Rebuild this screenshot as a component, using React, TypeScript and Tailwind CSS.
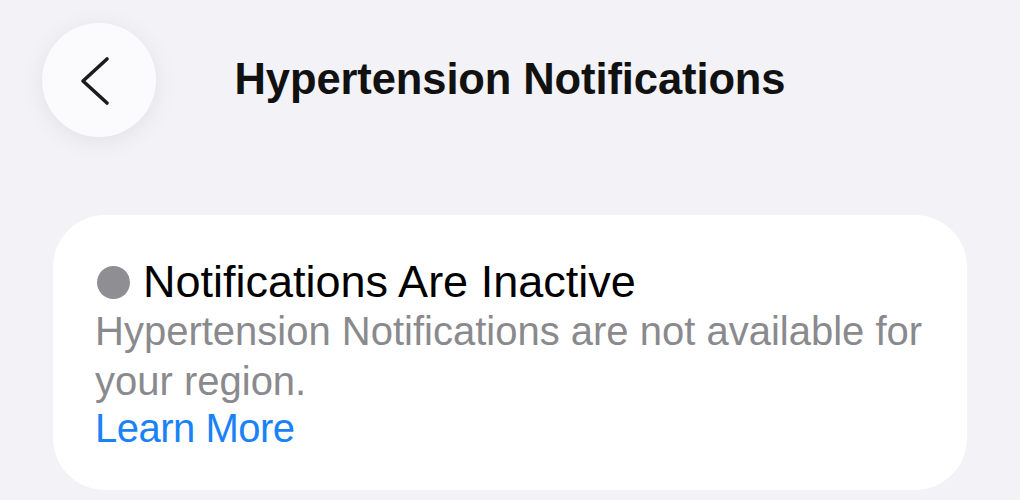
import React from 'react';

const font = { fontFamily: '"Liberation Sans", Arial, sans-serif' };

export default function App() {
  return (
    <div className="w-[1020px] h-[500px] bg-[#f2f2f7] overflow-hidden" style={font}>
      <div className="grid grid-cols-[1fr_auto_1fr] items-center pt-[23px] pl-[42px]">
        <button
          aria-label="Back"
          className="w-[114px] h-[114px] rounded-full bg-[#fbfbfd] shadow-[0_4px_24px_rgba(0,0,0,0.07)] flex items-center justify-center justify-self-start"
        >
          <svg width="114" height="114" viewBox="0 0 114 114" fill="none">
            <path
              d="M65 36 L41 58 L65 80"
              stroke="#1c1c1e"
              strokeWidth="3.6"
              strokeLinecap="round"
              strokeLinejoin="round"
            />
          </svg>
        </button>
        <h1 className="text-[43.5px] font-bold text-[#111] leading-none -ml-[42px] tracking-[-0.1px]">
          Hypertension Notifications
        </h1>
        <div />
      </div>

      <div className="mx-[53px] mt-[78px] h-[275px] bg-white rounded-[52px] pt-[43px] pl-[42px] pr-[36px]">
        <div className="flex items-center text-[45px] leading-[48px] text-black">
          <span className="w-[33px] h-[33px] rounded-full bg-[#8e8e93] ml-[2px] mr-[13px] shrink-0" />
          Notifications Are Inactive
        </div>
        <p className="text-[40px] leading-[50px] text-[#8a8a8e]">
          Hypertension Notifications are not available for your region.
        </p>
        <div className="text-[40px] leading-[44px] text-[#1a82f7] tracking-[-0.5px]">Learn More</div>
      </div>
    </div>
  );
}
